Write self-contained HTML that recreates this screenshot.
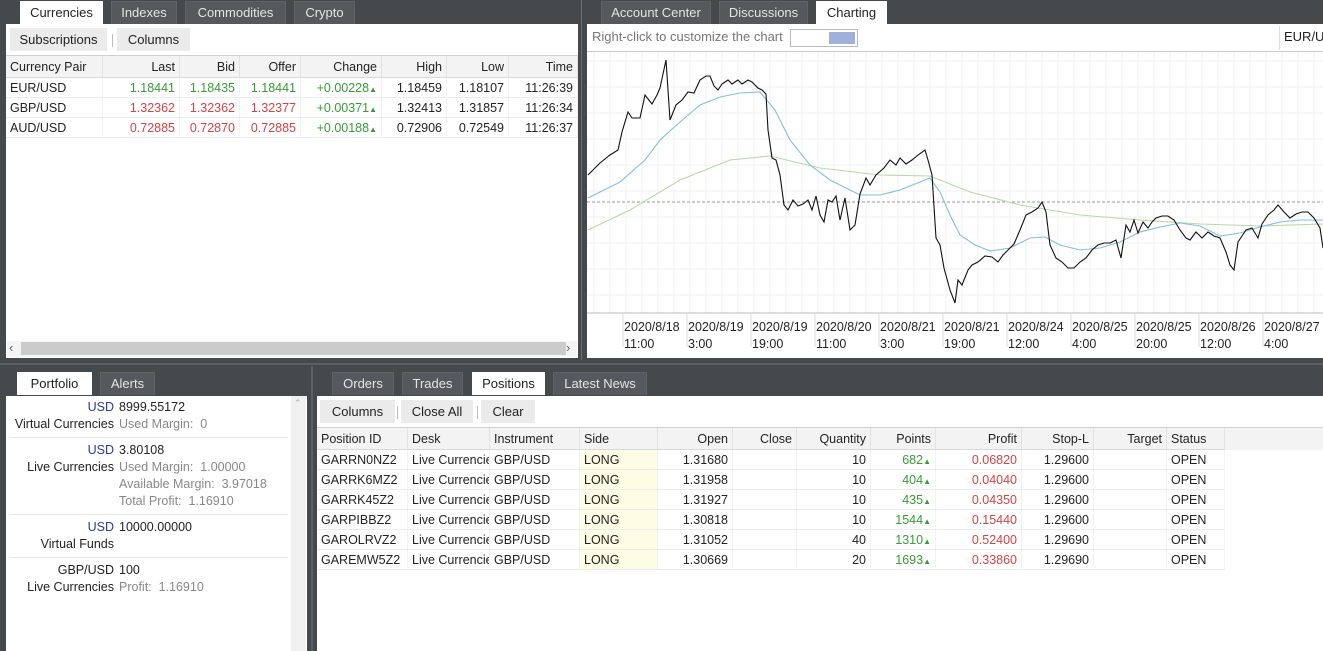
<!DOCTYPE html>
<html><head><meta charset="utf-8"><style>
*{box-sizing:border-box;margin:0;padding:0}
body{width:1323px;height:651px;background:#45494c;font-family:"Liberation Sans","Noto Sans CJK SC",sans-serif;font-size:12.5px;color:#222;position:relative;overflow:hidden}
.a{position:absolute}
.tab{position:absolute;height:23px;background:#55595d;color:#e4e4e4;text-align:center;line-height:22px;font-size:13px;border:1px solid #5f6367;border-bottom:none}
.tab.on{background:#fff;color:#222;border-color:#fff}
.pan{position:absolute;background:#fff}
.btn{position:absolute;height:23px;background:#ebebeb;line-height:23px;text-align:center;font-size:13px;color:#222}
.c{position:absolute;white-space:nowrap;overflow:hidden;line-height:20px;height:20px;padding:0 4px}
.r{text-align:right}
.g{color:#3a9a3a}.rd{color:#d04545}
.hd{background:#f3f3f3;border-right:1px solid #e2e2e2;border-bottom:1px solid #d8d8d8;height:22px;line-height:22px}
.row{border-bottom:1px solid #ececec;border-right:1px solid #f2f2f2}
.tri{font-size:8px}
.pl{position:absolute;right:0;width:108px;text-align:right;white-space:nowrap;line-height:17px}
.pv{position:absolute;left:119px;white-space:nowrap;line-height:17px}
.gr{color:#888}.bl{color:#2a3a9a}
</style></head><body>
<div class="tab on" style="left:20px;top:1px;width:83px">Currencies</div>
<div class="tab" style="left:111px;top:1px;width:66px">Indexes</div>
<div class="tab" style="left:185px;top:1px;width:101px">Commodities</div>
<div class="tab" style="left:294px;top:1px;width:61px">Crypto</div>
<div class="pan" style="left:6px;top:24px;width:572px;height:334px">
 <div class="btn" style="left:4px;top:4px;width:97px">Subscriptions</div>
 <div class="a" style="left:106px;top:10px;width:1px;height:13px;background:#bbb"></div>
 <div class="btn" style="left:111px;top:4px;width:73px">Columns</div>
 <div class="a" style="left:0;top:31px;width:572px;height:1px;background:#d0d0d0"></div>
 <div class="a" style="left:0;top:32px;width:572px;height:22px;background:#f3f3f3"></div>
</div>
<div id="t1"></div>
<div class="a" style="left:7px;top:341px;width:570px;height:16px;background:#f4f4f4"></div>
<div class="a" style="left:21px;top:342px;width:545px;height:13px;background:#cbcbcb"></div>
<div class="a" style="left:9px;top:340px;font-size:13px;color:#666">‹</div>
<div class="a" style="left:566px;top:340px;font-size:13px;color:#666">›</div>
<div class="a" style="left:581px;top:0;width:1px;height:360px;background:#6a6e72"></div>
<div class="tab" style="left:601px;top:1px;width:110px">Account Center</div>
<div class="tab" style="left:719px;top:1px;width:89px">Discussions</div>
<div class="tab on" style="left:816px;top:1px;width:71px">Charting</div>
<div class="pan" style="left:587px;top:24px;width:736px;height:334px">
 <div class="a" style="left:5px;top:5px;color:#777;font-size:13px">Right-click to customize the chart</div>
 <div class="a" style="left:203px;top:5px;width:68px;height:18px;border:1px solid #bbb;background:#fff"><div class="a" style="right:2px;top:2px;width:26px;height:12px;background:#9fb0dd"></div></div>
 <div class="a" style="left:692px;top:2px;width:1px;height:24px;background:#ddd"></div>
 <div class="a" style="left:697px;top:5px;font-size:13px">EUR/U</div>
 <div class="a" style="left:0;top:27px;width:736px;height:1px;background:#ccc"></div>
</div>
<svg class="a" style="left:587px;top:52px" width="736" height="306">
 <g stroke="#f1f1f1" stroke-width="1" id="grid"></g>
 <line x1="0" y1="150" x2="736" y2="150" stroke="#999" stroke-dasharray="3,2"/>
 <line x1="0" y1="261" x2="736" y2="261" stroke="#bbb"/>
 <g transform="translate(-587,-52)" fill="none" stroke-width="1.1">
 <polyline stroke="#b9d8a6" points="588,230 630,210 680,180 730,160 770,156 820,168 880,175 930,176 970,192 1020,205 1080,215 1140,220 1200,224 1260,226 1323,224"/>
 <polyline stroke="#86bfd9" points="588,198 620,182 645,160 660,140 680,122 700,105 720,97 740,93 760,92 775,110 790,140 810,165 830,180 860,195 880,195 900,190 920,182 930,178 940,192 950,215 960,235 975,245 990,251 1010,248 1030,238 1045,237 1060,245 1080,250 1100,248 1120,242 1140,232 1160,227 1180,223 1200,226 1220,236 1240,233 1260,227 1280,222 1300,220 1323,220"/>
 <polyline stroke="#111" points="588,175 595,168 600,163 610,155 618,150 622,132 628,112 632,118 640,118 645,95 652,104 657,95 660,88 666,60 668,90 670,120 676,105 682,100 688,92 694,93 700,80 706,76 710,76 714,86 718,90 722,84 728,80 732,84 738,80 742,84 748,80 752,82 758,88 762,90 766,94 768,130 772,158 776,160 780,175 784,205 788,210 793,200 798,206 803,204 808,200 812,210 816,196 820,215 824,222 828,200 832,202 836,196 840,220 845,198 850,230 855,225 860,194 866,178 870,185 876,175 884,168 890,160 896,165 900,158 906,164 912,160 918,155 925,150 928,160 932,175 936,238 940,245 944,268 950,290 955,303 958,280 962,285 968,270 972,265 978,262 985,256 992,257 998,262 1003,255 1008,250 1014,244 1020,230 1026,215 1032,212 1038,208 1042,202 1046,212 1050,245 1056,258 1062,262 1068,268 1074,268 1080,262 1086,258 1092,250 1098,245 1104,243 1110,243 1116,240 1121,258 1126,225 1130,232 1134,220 1138,233 1143,222 1148,228 1152,222 1156,218 1162,216 1168,216 1174,220 1180,230 1186,238 1190,240 1196,232 1202,238 1208,232 1214,236 1220,238 1226,252 1230,265 1234,270 1238,242 1242,236 1246,230 1252,228 1258,238 1262,224 1268,215 1274,210 1278,205 1284,212 1290,218 1296,214 1302,212 1308,212 1314,218 1320,228 1323,248"/>
 </g>
 <g font-size="12.5" fill="#222" id="lab"></g>
</svg>
<div class="a" style="left:0;top:363px;width:1323px;height:2px;background:#5c6064"></div>
<div class="a" style="left:311px;top:366px;width:2px;height:285px;background:#5c6064"></div>
<div class="tab on" style="left:17px;top:372px;width:75px">Portfolio</div>
<div class="tab" style="left:100px;top:372px;width:55px">Alerts</div>
<div class="pan" style="left:6px;top:396px;width:301px;height:255px">
 <div class="a" style="left:285px;top:0;width:15px;height:255px;background:#f0f0f0"></div>
 <div class="a" style="left:288px;top:2px;font-size:9px;color:#aaa">⌃</div>
 <div class="a" style="left:4px;top:41px;width:278px;height:1px;background:#e8e8e8"></div>
 <div class="a" style="left:4px;top:118px;width:278px;height:1px;background:#e8e8e8"></div>
 <div class="a" style="left:4px;top:161px;width:278px;height:1px;background:#e8e8e8"></div>
</div>
<div class="a" style="left:6px;top:396px;width:108px;height:255px">
 <div class="pl bl" style="top:3px">USD</div><div class="pl" style="top:20px">Virtual Currencies</div>
 <div class="pl bl" style="top:46px">USD</div><div class="pl" style="top:63px">Live Currencies</div>
 <div class="pl bl" style="top:123px">USD</div><div class="pl" style="top:140px">Virtual Funds</div>
 <div class="pl" style="top:166px">GBP/USD</div><div class="pl" style="top:183px">Live Currencies</div>
</div>
<div class="a" style="left:0;top:396px;width:300px;height:255px">
 <div class="pv" style="top:3px">8999.55172</div><div class="pv gr" style="top:20px">Used Margin:&nbsp; 0</div>
 <div class="pv" style="top:46px">3.80108</div><div class="pv gr" style="top:63px">Used Margin:&nbsp; 1.00000</div>
 <div class="pv gr" style="top:80px">Available Margin:&nbsp; 3.97018</div><div class="pv gr" style="top:97px">Total Profit:&nbsp; 1.16910</div>
 <div class="pv" style="top:123px">10000.00000</div>
 <div class="pv" style="top:166px">100</div><div class="pv gr" style="top:183px">Profit:&nbsp; 1.16910</div>
</div>
<div class="tab" style="left:332px;top:372px;width:62px">Orders</div>
<div class="tab" style="left:402px;top:372px;width:61px">Trades</div>
<div class="tab on" style="left:472px;top:372px;width:73px">Positions</div>
<div class="tab" style="left:553px;top:372px;width:94px">Latest News</div>
<div class="pan" style="left:317px;top:396px;width:1006px;height:255px">
 <div class="btn" style="left:3px;top:4px;width:75px">Columns</div>
 <div class="a" style="left:80px;top:10px;width:1px;height:13px;background:#bbb"></div>
 <div class="btn" style="left:84px;top:4px;width:72px">Close All</div>
 <div class="a" style="left:160px;top:10px;width:1px;height:13px;background:#bbb"></div>
 <div class="btn" style="left:164px;top:4px;width:54px">Clear</div>
 <div class="a" style="left:0;top:31px;width:1006px;height:1px;background:#d0d0d0"></div>
 <div class="a" style="left:0;top:32px;width:1006px;height:22px;background:#f3f3f3"></div>
</div>
<div id="t2"></div>
<script>
function tbl(id,x0,y0,cols,rows,rh,hh){
 let h='';
 cols.forEach((c,i)=>{h+=`<div class="c hd ${c[2]||''}" style="left:${x0+c[0]}px;top:${y0}px;width:${c[1]}px">${c[3]}</div>`;});
 rows.forEach((r,j)=>{cols.forEach((c,i)=>{let v=r[i],cl='';if(Array.isArray(v)){cl=v[1];v=v[0];}
 let bg=(id=='t2'&&i==3)?'background:#fdfde6;':'';
 h+=`<div class="c row ${c[2]||''} ${cl}" style="${bg}left:${x0+c[0]}px;top:${y0+hh+j*rh}px;width:${c[1]}px;height:${rh}px;line-height:${rh}px">${v}</div>`;});});
 document.getElementById(id).innerHTML=h;}
const T='<span class="tri">&#9650;</span>';
tbl('t1',6,56,[[0,97,'','Currency Pair'],[97,77,'r','Last'],[174,60,'r','Bid'],[234,61,'r','Offer'],[295,81,'r','Change'],[376,65,'r','High'],[441,62,'r','Low'],[503,69,'r','Time']],
[['EUR/USD',['1.18441','g'],['1.18435','g'],['1.18441','g'],['+0.00228'+T,'g'],'1.18459','1.18107','11:26:39'],
 ['GBP/USD',['1.32362','rd'],['1.32362','rd'],['1.32377','rd'],['+0.00371'+T,'g'],'1.32413','1.31857','11:26:34'],
 ['AUD/USD',['0.72885','rd'],['0.72870','rd'],['0.72885','rd'],['+0.00188'+T,'g'],'0.72906','0.72549','11:26:37']],20,22);
const R=[['GARRN0NZ2','1.31680','10','682','0.06820','1.29600'],['GARRK6MZ2','1.31958','10','404','0.04040','1.29600'],['GARRK45Z2','1.31927','10','435','0.04350','1.29600'],['GARPIBBZ2','1.30818','10','1544','0.15440','1.29600'],['GAROLRVZ2','1.31052','40','1310','0.52400','1.29690'],['GAREMW5Z2','1.30669','20','1693','0.33860','1.29690']];
tbl('t2',317,428,[[0,91,'','Position ID'],[91,82,'','Desk'],[173,90,'','Instrument'],[263,78,'','Side'],[341,75,'r','Open'],[416,64,'r','Close'],[480,74,'r','Quantity'],[554,65,'r','Points'],[619,86,'r','Profit'],[705,72,'r','Stop-L'],[777,73,'r','Target'],[850,58,'','Status']],
R.map(r=>[r[0],'Live Currencies','GBP/USD','LONG',r[1],'',r[2],[r[3]+T,'g'],[r[4],'rd'],r[5],'','OPEN']),20,22);
let g='';for(let x=7;x<736;x+=16)g+=`<line x1="${x}" y1="0" x2="${x}" y2="261"/>`;for(let y=9;y<261;y+=26)g+=`<line x1="0" y1="${y}" x2="736" y2="${y}"/>`;
document.getElementById('grid').innerHTML=g;
const L=[['2020/8/18','11:00'],['2020/8/19','3:00'],['2020/8/19','19:00'],['2020/8/20','11:00'],['2020/8/21','3:00'],['2020/8/21','19:00'],['2020/8/24','12:00'],['2020/8/25','4:00'],['2020/8/25','20:00'],['2020/8/26','12:00'],['2020/8/27','4:00']];
let l='';L.forEach((v,i)=>{let x=36+i*64;l+=`<line x1="${x}" y1="261" x2="${x}" y2="295" stroke="#ddd"/><text x="${x+1}" y="279">${v[0]}</text><text x="${x+1}" y="296">${v[1]}</text>`;});
document.getElementById('lab').innerHTML=l;
</script>
</body></html>
